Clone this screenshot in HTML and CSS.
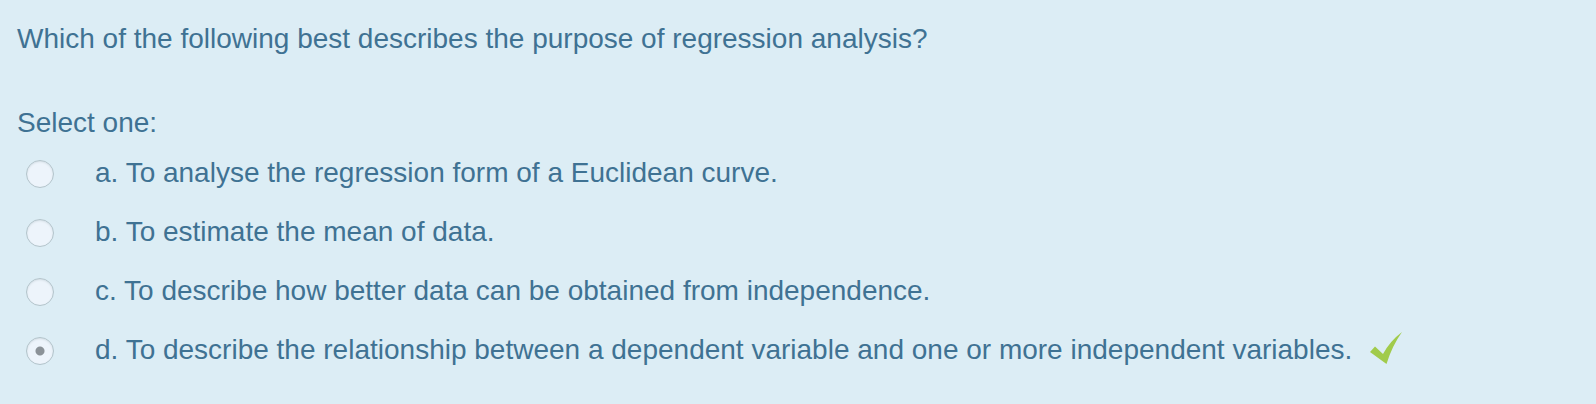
FILE: index.html
```html
<!DOCTYPE html>
<html lang="en">
<head>
<meta charset="utf-8">
<title>Quiz question</title>
<link rel="stylesheet" href="styles.css">
</head>
<body>
<form class="question">
  <p class="question-text">Which of the following best describes the purpose of regression analysis?</p>
  <fieldset class="answers">
    <legend class="prompt">Select one:</legend>
    <div class="option"><input class="radio" type="radio" name="answer" id="a"><label class="label" for="a">a. To analyse the regression form of a Euclidean curve.</label></div>
    <div class="option"><input class="radio" type="radio" name="answer" id="b"><label class="label" for="b">b. To estimate the mean of data.</label></div>
    <div class="option"><input class="radio" type="radio" name="answer" id="c"><label class="label" for="c">c. To describe how better data can be obtained from independence.</label></div>
    <div class="option"><input class="radio" type="radio" name="answer" id="d" checked><label class="label" for="d">d. To describe the relationship between a dependent variable and one or more independent variables.</label><svg class="tick" viewBox="0 0 32 32" role="img" aria-label="Correct"><path d="M0 20 L5 14.5 L13 22 Q20 9 32 0 Q22 14 16.5 32 Z"/></svg></div>
  </fieldset>
</form>
</body>
</html>
```
FILE: styles.css
```css
body {
  margin: 0;
  background: #fff;
  color: #3f7293;
  font: 28px/40px "Helvetica Neue", "Liberation Sans", Arial, sans-serif;
}
.question {
  padding: 19px 17px 24px;
  background: #dcedf5;
}
.question-text {
  margin: 0 0 44px;
}
.answers {
  margin: 0;
  padding: 0;
  border: 0;
}
.prompt {
  padding: 0 0 1px;
}
.option {
  display: flex;
  align-items: center;
  min-height: 59px;
  padding-left: 9px;
}
.label {
  padding-bottom: 2px;
}
.radio {
  appearance: none;
  flex: none;
  width: 28px;
  height: 28px;
  margin: 0 41px 0 0;
  border: 1px solid #b3c4cb;
  border-radius: 50%;
  background: #edf4fb;
  box-shadow: inset 0 1px 2px #d3dde4;
}
.radio:checked {
  background: radial-gradient(circle, #8b9298 0 4px, #edf4fb 5px);
}
.tick {
  flex: none;
  width: 32px;
  height: 32px;
  margin: 0 0 6px 18px;
  fill: #a1cb4b;
}
```
